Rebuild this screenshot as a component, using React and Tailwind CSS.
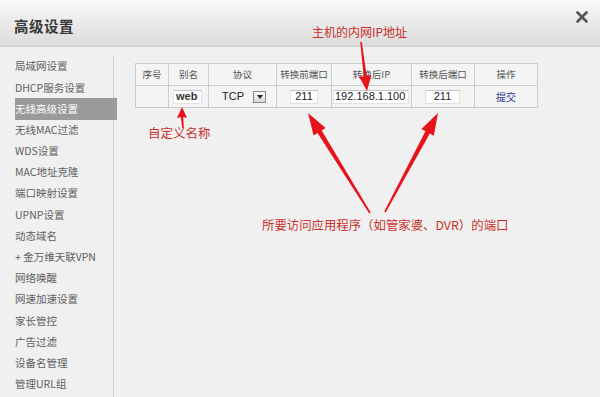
import { useState } from "react"

const menu = [
  "局域网设置",
  "DHCP服务设置",
  "无线高级设置",
  "无线MAC过滤",
  "WDS设置",
  "MAC地址克隆",
  "端口映射设置",
  "UPNP设置",
  "动态域名",
  "+ 金万维天联VPN",
  "网络唤醒",
  "网速加速设置",
  "家长管控",
  "广告过滤",
  "设备名管理",
  "管理URL组",
]

const cols = [
  { label: "序号", w: "w-[33px]" },
  { label: "别名", w: "w-[40px]" },
  { label: "协议", w: "w-[68px]" },
  { label: "转换前端口", w: "w-[55px]" },
  { label: "转换后IP", w: "w-[80px]" },
  { label: "转换后端口", w: "w-[63px]" },
  { label: "操作", w: "w-[63px]" },
]

const cjk = "font-['Noto_Sans_CJK_SC',sans-serif]"
const latin = "font-['Liberation_Sans','Noto_Sans_CJK_SC',sans-serif]"
const field = "h-[14px] bg-white border border-[#e2e2e2] border-t-[#c4c4c4] flex items-center"

export default function App() {
  const [active] = useState(2)

  return (
    <div className={`relative w-[600px] h-[397px] overflow-hidden bg-[#f0f0f0] ${cjk}`}>
      {/* Header */}
      <div className="h-[47px] flex items-center justify-between px-[14px] bg-gradient-to-b from-[#f8f8f8] to-[#dcdcdc] border-b border-[#cfcfcf]">
        <h1 className="text-[14.5px] font-bold text-[#3a3a3a] tracking-[0.5px] pt-[6px]">高级设置</h1>
        <svg className="w-[12px] h-[12px] mb-[12px] mr-[-2px]" viewBox="0 0 12 12">
          <path d="M1.5 1.5 L10.5 10.5 M10.5 1.5 L1.5 10.5" stroke="#555" strokeWidth="2.6" strokeLinecap="round" />
        </svg>
      </div>

      <div className="flex">
        {/* Sidebar */}
        <div className="ml-[15px] mt-[8px] w-[99px] h-[345px] pt-[1px] border-r border-[#cfcfcf]">
          {menu.map((item, i) => (
            <div
              key={item}
              className={`h-[21.2px] flex items-center text-[10.5px] leading-none ${
                i === active ? "bg-[#9a9a9a] text-white mr-[-4px]" : "text-[#606060]"
              }`}
            >
              {item}
            </div>
          ))}
        </div>

        {/* Content */}
        <div className="pl-[21px] pt-[16px]">
          <table className="border-collapse bg-[#f4f4f4]">
            <thead>
              <tr className="h-[22px]">
                {cols.map((c) => (
                  <th
                    key={c.label}
                    className={`${c.w} border border-[#cccccc] text-[9.5px] font-normal text-[#555] text-center leading-none p-0`}
                  >
                    {c.label}
                  </th>
                ))}
              </tr>
            </thead>
            <tbody>
              <tr className={`h-[22px] ${latin} text-[11px] text-[#222]`}>
                <td className="border border-[#cccccc]"></td>
                <td className="border border-[#cccccc] p-0">
                  <div className={`ml-[4px] w-[29px] pl-[2px] font-bold text-[#333] ${field}`}>web</div>
                </td>
                <td className="border border-[#cccccc] p-0">
                  <div className="flex items-center pl-[13px]">
                    <span className="w-[31px]">TCP</span>
                    <span className="w-[13px] h-[12px] border border-[#888] bg-gradient-to-b from-[#fafafa] to-[#d8d8d8] flex items-center justify-center">
                      <svg className="w-[6px] h-[4px]" viewBox="0 0 6 4">
                        <path d="M0 0 L6 0 L3 4 Z" fill="#222" />
                      </svg>
                    </span>
                  </div>
                </td>
                <td className="border border-[#cccccc] p-0">
                  <div className={`ml-[13px] w-[28px] justify-center ${field}`}>211</div>
                </td>
                <td className="border border-[#cccccc] p-0">
                  <div className={`ml-[1px] w-[76px] pl-[1px] ${field}`}>192.168.1.100</div>
                </td>
                <td className="border border-[#cccccc] p-0">
                  <div className={`ml-[13px] w-[35px] justify-center ${field}`}>211</div>
                </td>
                <td className={`border border-[#cccccc] text-center text-[10px] text-[#2a3a9c] ${cjk}`}>提交</td>
              </tr>
            </tbody>
          </table>
        </div>
      </div>

      {/* Annotations */}
      <svg className="absolute inset-0 w-[600px] h-[397px] pointer-events-none" viewBox="0 0 600 397">
        <g fill="#e8121a">
          <polygon points="367,91 371.2,75.4 366.7,75.9 361.8,41.9 360.2,42.1 363.7,76.3 359.2,76.8" />
          <polygon points="182,107 187,118 183.2,117 183.8,128 182.2,128 180.8,117 177,118" />
          <polygon points="308,113 325.6,128 321.7,130.4 370.7,212.6 369.3,213.4 317.5,133 313.6,135.4" />
          <polygon points="438,113 433.8,135.7 429.8,133.6 385.7,212.4 384.3,211.6 425.4,131.2 421.4,129.1" />
        </g>
      </svg>
      <div className="absolute left-[312px] top-[26px] text-[12px] leading-none text-[#c9302c]">主机的内网IP地址</div>
      <div className="absolute left-[148px] top-[127px] text-[12.5px] leading-none text-[#c9302c]">自定义名称</div>
      <div className="absolute left-[262px] top-[219px] text-[12.4px] leading-none text-[#c9302c]">
        所要访问应用程序（如管家婆、DVR）的端口
      </div>
    </div>
  )
}
